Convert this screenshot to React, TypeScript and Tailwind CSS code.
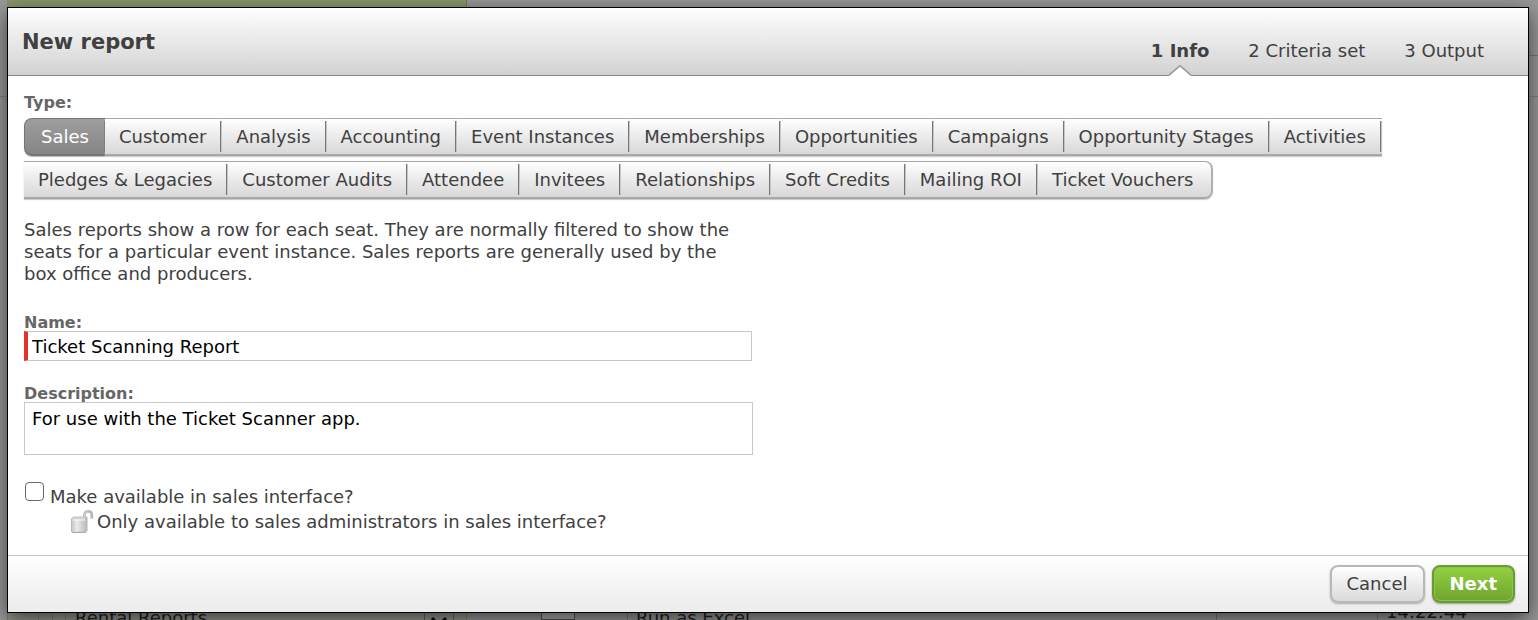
import { useState } from "react";

const types = [
  "Sales",
  "Customer",
  "Analysis",
  "Accounting",
  "Event Instances",
  "Memberships",
  "Opportunities",
  "Campaigns",
  "Opportunity Stages",
  "Activities",
  "Pledges & Legacies",
  "Customer Audits",
  "Attendee",
  "Invitees",
  "Relationships",
  "Soft Credits",
  "Mailing ROI",
  "Ticket Vouchers",
];

function UnlockedIcon() {
  return (
    <svg width="24" height="25" viewBox="0 0 24 25" className="shrink-0" aria-hidden="true">
      <defs>
        <linearGradient id="lockBody" x1="0" x2="1" y1="0" y2="0">
          <stop offset="0" stopColor="#c6c6c6" />
          <stop offset="0.35" stopColor="#ebebeb" />
          <stop offset="1" stopColor="#b8b8b8" />
        </linearGradient>
      </defs>
      <path
        d="M14.5 8V6C14.5 3.6 16.2 2.4 18.4 2.4S21.8 3.6 21.8 6V9.5"
        fill="none"
        stroke="#b8b8b8"
        strokeWidth="2.8"
      />
      <path d="M14.7 8V6C14.7 4 16.2 2.8 18.2 2.8" fill="none" stroke="#dadada" strokeWidth="1" />
      <path
        d="M1.5 10L3.5 8H17V22L15.5 23.5H2.5L1.5 22.5Z"
        fill="url(#lockBody)"
        stroke="#b8b8b8"
        strokeWidth="1"
      />
      <path d="M2.5 10.2L4 8.6H16.2L15 10.2Z" fill="#d2d2d2" />
      <path d="M2.5 11H15" stroke="#f6f6f6" strokeWidth="1" />
      <path d="M2.5 23.3H15.5" stroke="#a8a8a8" strokeWidth="1" />
    </svg>
  );
}

function BackgroundPage() {
  return (
    <div
      className="absolute inset-0 flex flex-col justify-between overflow-hidden bg-[#999] text-[18px] text-[#222]"
      aria-hidden="true"
    >
      <div className="flex h-[97px] border-b border-[#808080] pl-[7px]">
        <div className="h-2 w-[460px] border-r border-[#777] bg-[#8a976f]" />
        <div className="ml-auto h-[56px] w-3 border-b border-[#777]" />
      </div>
      <div className="-mb-3 flex h-6 pl-[7px] leading-5">
        <div className="flex w-[460px] items-start border-x border-[#7e8568] bg-[#94968c]">
          <div className="ml-[30px] flex h-6 w-7 justify-center border-x border-[#7e8568]">
            <div className="w-px bg-[#7e8568]" />
          </div>
          <div className="ml-[9px]">Rental Reports</div>
          <div className="mr-3 ml-auto h-6 w-[30px] border-x border-[#666]">
            <svg width="28" height="20" viewBox="0 0 28 20" aria-hidden="true">
              <path d="M7 10L14 17L21 10" fill="none" stroke="#111" strokeWidth="3" />
            </svg>
          </div>
        </div>
        <div className="ml-[74px] h-3 w-[34px] border border-[#555] bg-[#aaa]" />
        <div className="ml-[52px] w-[590px] border-x border-[#777] pl-2">Run as Excel</div>
        <div className="ml-[160px] border-l border-[#777] pl-2 leading-2">14:22:44</div>
      </div>
    </div>
  );
}

function TypeTabs({ value, onChange }: { value: string; onChange: (v: string) => void }) {
  return (
    <div className="flex flex-wrap gap-y-[5px]" role="group" aria-labelledby="type-label">
      {types.map((t) => (
        <button
          key={t}
          type="button"
          aria-pressed={t === value}
          onClick={() => onChange(t)}
          className={
            t === value
              ? "h-[38px] border-t border-b-2 border-t-[#757575] border-b-[#747474] bg-linear-to-b from-[#9e9e9e] to-[#858585] text-white shadow-[0_1px_1px_#bbb] first:rounded-l-lg first:border-l first:border-l-[#757575] last:rounded-r-lg"
              : "group h-[38px] border-t border-b-2 border-t-[#a8a8a8] border-b-[#a8a8a8] bg-linear-to-b from-white to-[#d9d7d8] text-[#404040] shadow-[0_1px_1px_#ccc] first:rounded-l-lg last:rounded-r-lg last:border-r-2 last:border-r-[#b0b0b0]"
          }
        >
          <span
            className={
              t === value
                ? "block border-r border-[#6f6f6f] pr-[15px] pl-4 leading-[31px]"
                : "mr-px block border-r border-[#777] px-[14px] leading-[31px] shadow-[1px_0_0_#c4c4c4] group-last:border-transparent group-last:pr-4 group-last:shadow-none"
            }
          >
            {t}
          </span>
        </button>
      ))}
    </div>
  );
}

export default function App() {
  const [type, setType] = useState("Sales");

  return (
    <div className="relative min-h-screen font-['DejaVu_Sans',Verdana,sans-serif] text-[18px] leading-[22px] text-[#404040]">
      <BackgroundPage />
      <div className="relative pt-[7px] pr-[9px] pb-[7px] pl-[7px]">
        <form
          role="dialog"
          aria-labelledby="dialog-title"
          onSubmit={(e) => e.preventDefault()}
          className="border border-black bg-white shadow-[0_6px_20px_rgba(0,0,0,0.6)]"
        >
          <header className="flex h-[68px] justify-between border-b border-[#858585] bg-linear-to-b from-white to-[#d2d2d2] pr-[44px] pl-[14px]">
            <h1 id="dialog-title" className="pt-[23px] text-[21px] font-bold">
              New report
            </h1>
            <ol className="flex gap-[39px] pt-8">
              <li className="relative font-bold" aria-current="step">
                1 Info
                <svg
                  className="absolute top-[25px] left-1/2 -translate-x-1/2"
                  width="24"
                  height="12"
                  viewBox="0 0 24 12"
                  aria-hidden="true"
                >
                  <path d="M0 11L12 0.5L24 11V12H0Z" fill="#fff" />
                  <path d="M0.5 10.6L12 0.7L23.5 10.6" fill="none" stroke="#999" strokeWidth="1.6" />
                </svg>
              </li>
              <li>2 Criteria set</li>
              <li>3 Output</li>
            </ol>
          </header>

          <div className="px-4 pt-4 pb-[21px]">
            <div id="type-label" className="mb-1 text-[16px] font-bold text-[#666]">
              Type:
            </div>
            <TypeTabs value={type} onChange={setType} />

            <p className="mt-5 max-w-[728px]">
              Sales reports show a row for each seat. They are normally filtered to show the seats for a
              particular event instance. Sales reports are generally used by the box office and producers.
            </p>

            <label htmlFor="name" className="mt-[29px] block text-[16px] leading-[17px] font-bold text-[#666]">
              Name:
            </label>
            <input
              id="name"
              defaultValue="Ticket Scanning Report"
              className="block h-[30px] w-full max-w-[728px] border border-l-4 border-[#c8c8c8] border-l-[#e63329] bg-white pl-1 text-black outline-none"
            />

            <label
              htmlFor="description"
              className="mt-6 block text-[16px] leading-[17px] font-bold text-[#666]"
            >
              Description:
            </label>
            <textarea
              id="description"
              defaultValue="For use with the Ticket Scanner app."
              className="block h-[53px] w-full max-w-[729px] resize-none border border-[#c8c8c8] bg-white px-[7px] py-[5px] text-black outline-none"
            />

            <div className="mt-[27px] mb-px flex gap-[6px]">
              <input
                id="available"
                type="checkbox"
                className="ml-px size-[19px] appearance-none rounded-[4px] border border-[#6a6a6a] bg-white checked:bg-[#767676]"
              />
              <label htmlFor="available" className="pt-1">
                Make available in sales interface?
              </label>
            </div>
            <div className="flex items-center gap-[3px] pl-[46px]">
              <UnlockedIcon />
              <span>Only available to sales administrators in sales interface?</span>
            </div>
          </div>

          <footer className="flex justify-end gap-[7px] border-t border-[#c8c8c8] bg-linear-to-b from-white to-[#ececec] px-[13px] pt-[9px] pb-[9px]">
            <button
              type="button"
              className="h-[38px] rounded-lg border-2 border-[#b8b8b8] bg-linear-to-b from-white to-[#dbd9da] px-[15px] shadow-[0_1px_2px_#aaa]"
            >
              Cancel
            </button>
            <button
              type="submit"
              className="h-[38px] rounded-lg border-2 border-[#6b9a35] bg-linear-to-b from-[#93d140] to-[#6fa52e] px-4 font-bold text-white shadow-[0_1px_2px_#999,inset_0_0_0_1px_#8fc44c]"
            >
              Next
            </button>
          </footer>
        </form>
      </div>
    </div>
  );
}
